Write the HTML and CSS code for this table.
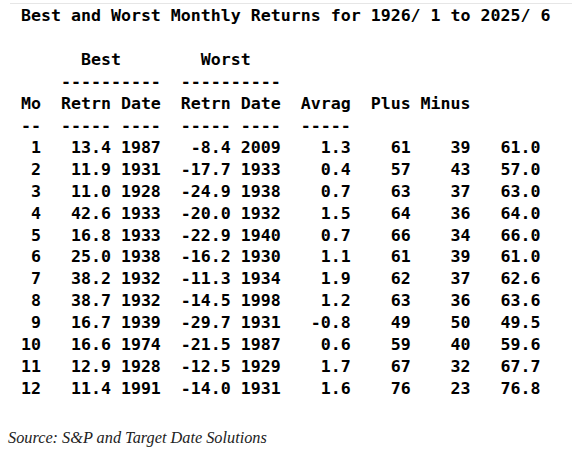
FILE: index.html
```html
<!DOCTYPE html>
<html lang="en">
<head>
  <meta charset="UTF-8" />
  <meta name="viewport" content="width=device-width, initial-scale=1.0" />
  <title>Best and Worst Monthly Returns</title>
  <link rel="stylesheet" href="styles.css">
</head>
<body>
  <div class="rule"></div>

  <!-- Monthly returns table, fixed-width report -->
<pre class="report">Best and Worst Monthly Returns for 1926/ 1 to 2025/ 6

      Best        Worst
    ----------  ----------
Mo  Retrn Date  Retrn Date  Avrag  Plus Minus
--  ----- ----  ----- ----  -----
 1   13.4 1987   -8.4 2009    1.3    61    39   61.0
 2   11.9 1931  -17.7 1933    0.4    57    43   57.0
 3   11.0 1928  -24.9 1938    0.7    63    37   63.0
 4   42.6 1933  -20.0 1932    1.5    64    36   64.0
 5   16.8 1933  -22.9 1940    0.7    66    34   66.0
 6   25.0 1938  -16.2 1930    1.1    61    39   61.0
 7   38.2 1932  -11.3 1934    1.9    62    37   62.6
 8   38.7 1932  -14.5 1998    1.2    63    36   63.6
 9   16.7 1939  -29.7 1931   -0.8    49    50   49.5
10   16.6 1974  -21.5 1987    0.6    59    40   59.6
11   12.9 1928  -12.5 1929    1.7    67    32   67.7
12   11.4 1991  -14.0 1931    1.6    76    23   76.8</pre>

  <p class="source">Source: S&amp;P and Target Date Solutions</p>
</body>
</html>
```

FILE: styles.css
```css
body {
  margin: 0;
  background-color: #ffffff;
  color: #000000;
}

.rule {
  margin: 3px 0 0 10px;
  border-top: 1px solid #e6e6e6;
}

.report {
  margin: 1px 0 0 21px;
  font-family: "DejaVu Sans Mono", monospace;
  font-weight: bold;
  font-size: 16.6px;
  line-height: 21.95px;
}

.source {
  margin: 28px 0 0 8px;
  font-family: "Liberation Serif", serif;
  font-style: italic;
  font-size: 16.3px;
  color: #222222;
}
```
